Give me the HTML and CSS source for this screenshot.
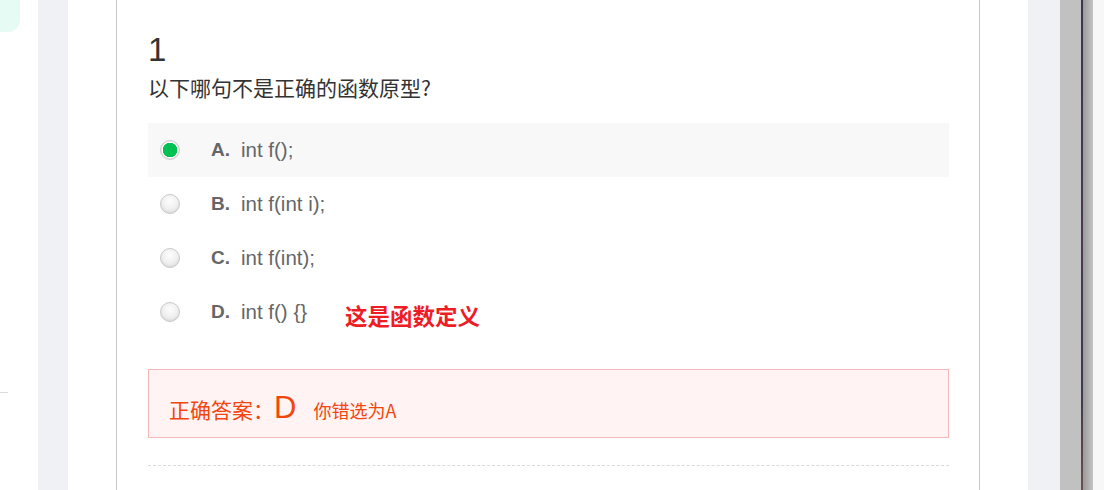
FILE: index.html
```html
<!DOCTYPE html>
<html lang="zh-CN">
<head>
<meta charset="utf-8">
<link rel="stylesheet" href="styles.css">
</head>
<body>
<div class="sidebar">
  <div class="mint"></div>
  <div class="sideline"></div>
</div>
<div class="main">
  <div class="panel">
    <div class="card">
      <div class="qnum">1</div>
      <div class="qtext">以下哪句不是正确的函数原型?</div>
      <div class="options">
        <div class="opt selected"><span class="radio"></span><span class="letter">A.</span><span class="code">int f();</span></div>
        <div class="opt"><span class="radio"></span><span class="letter">B.</span><span class="code">int f(int i);</span></div>
        <div class="opt"><span class="radio"></span><span class="letter">C.</span><span class="code">int f(int);</span></div>
        <div class="opt"><span class="radio"></span><span class="letter">D.</span><span class="code">int f() {}</span><span class="note">这是函数定义</span></div>
      </div>
      <div class="answer"><span class="alabel">正确答案：</span><span class="aletter">D</span><span class="wrong">你错选为A</span></div>
      <div class="dash"></div>
    </div>
  </div>
</div>
<div class="scroll">
  <div class="sb-track"></div>
  <div class="sb-dark"></div>
  <div class="sb-grad"></div>
  <div class="sb-edge"></div>
</div>
</body>
</html>
```
FILE: styles.css
```css
html, body {
  margin: 0;
  padding: 0;
  height: 490px;
  overflow: hidden;
}
body {
  display: flex;
  font-family: "Liberation Sans", Arial, "Noto Sans CJK SC", sans-serif;
  background: #fff;
}
.sidebar {
  width: 38px;
  flex: none;
  background: #fff;
  display: flex;
  flex-direction: column;
}
.mint {
  width: 20px;
  height: 32px;
  background: #e6fbf4;
  border-bottom-right-radius: 12px;
}
.sideline {
  width: 8px;
  height: 1px;
  background: #dcdcdc;
  margin-top: 360px;
}
.main {
  flex: 1;
  background: #f0f1f5;
  padding: 0 32px 0 30px;
  display: flex;
}
.panel {
  flex: 1;
  background: #fff;
  padding: 0 48px;
  display: flex;
}
.card {
  flex: 1;
  border-left: 1px solid #cbcbcb;
  border-right: 1px solid #cbcbcb;
  padding: 31px 30px 0 31px;
}
.qnum {
  font-size: 33px;
  line-height: 38px;
  color: #333;
}
.qtext {
  font-family: "Noto Sans CJK SC", sans-serif;
  font-size: 21px;
  line-height: 30px;
  color: #333;
  margin-top: 3px;
}
.options {
  margin-top: 21px;
}
.opt {
  height: 54px;
  display: flex;
  align-items: center;
  padding-left: 12px;
  color: #666;
  font-size: 21px;
}
.opt.selected {
  background: #f8f8f8;
}
.radio {
  width: 18px;
  height: 18px;
  border-radius: 50%;
  border: 1px solid #c9c9c9;
  background: radial-gradient(circle at 50% 35%, #fdfdfd 0%, #f0f0f0 50%, #dcdcdc 100%);
  box-shadow: inset 0 -1px 2px rgba(0,0,0,0.06);
  flex: none;
}
.selected .radio {
  background: radial-gradient(circle, #00c152 0 7px, #fff 7.5px 8px, #e2e2e2 9px);
  border-color: #cfcfcf;
}
.letter {
  font-weight: bold;
  font-size: 19px;
  margin-left: 31px;
  width: 30px;
}
.code {
  color: #666;
  font-size: 20.5px;
}
.note {
  font-family: "Noto Sans CJK SC", sans-serif;
  font-weight: bold;
  color: #ee1c25;
  font-size: 22.5px;
  margin-left: 38px;
  margin-top: 6px;
}
.answer {
  margin-top: 30px;
  height: 67px;
  border: 1px solid #f5b8b8;
  background: #fff3f3;
  display: flex;
  align-items: baseline;
  padding: 0 20px;
  color: #f2460f;
  font-family: "Noto Sans CJK SC", sans-serif;
  line-height: 76px;
}
.alabel {
  font-size: 21px;
}
.aletter {
  font-family: "Liberation Sans", Arial, sans-serif;
  font-size: 31px;
  margin-left: 0;
}
.wrong {
  font-size: 18px;
  margin-left: 17px;
}
.dash {
  margin-top: 27px;
  border-top: 1px dashed #dadada;
}
.scroll {
  width: 44px;
  flex: none;
  display: flex;
}
.sb-track { width: 21px; background: #c1c1c1; }
.sb-dark { width: 2px; background: linear-gradient(#3b3648, #4a3a52 50%, #40384c 80%, #6a5050); }
.sb-grad { width: 10px; background: linear-gradient(90deg, #9a9a9a, #c4c4c4); }
.sb-edge { width: 11px; background: #f7f7f7; }
```
